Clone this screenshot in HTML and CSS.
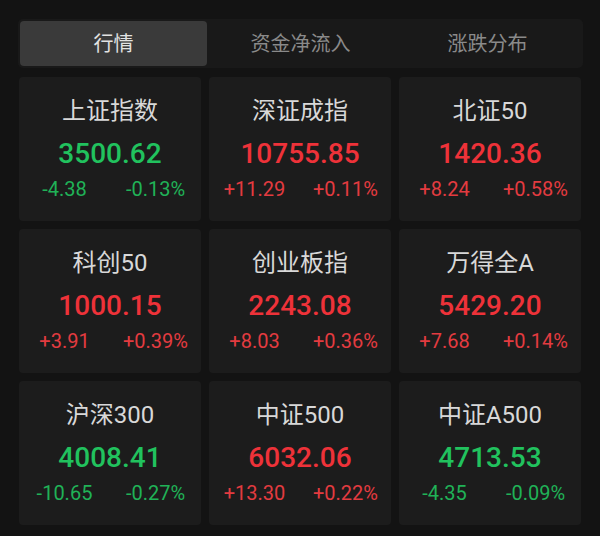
FILE: index.html
```html
<!DOCTYPE html>
<html lang="zh-CN">
<head>
<meta charset="utf-8">
<title>行情</title>
<link rel="stylesheet" href="styles.css">
</head>
<body>
<div class="page">
  <div class="tabs">
    <div class="tab active">行情</div>
    <div class="tab">资金净流入</div>
    <div class="tab">涨跌分布</div>
  </div>
  <div class="grid">
    <div class="card"><div class="name">上证指数</div><div class="price down">3500.62</div><div class="chg down"><span>-4.38</span><span>-0.13%</span></div></div>
    <div class="card"><div class="name">深证成指</div><div class="price up">10755.85</div><div class="chg up"><span>+11.29</span><span>+0.11%</span></div></div>
    <div class="card"><div class="name">北证50</div><div class="price up">1420.36</div><div class="chg up"><span>+8.24</span><span>+0.58%</span></div></div>
    <div class="card"><div class="name">科创50</div><div class="price up">1000.15</div><div class="chg up"><span>+3.91</span><span>+0.39%</span></div></div>
    <div class="card"><div class="name">创业板指</div><div class="price up">2243.08</div><div class="chg up"><span>+8.03</span><span>+0.36%</span></div></div>
    <div class="card"><div class="name">万得全A</div><div class="price up">5429.20</div><div class="chg up"><span>+7.68</span><span>+0.14%</span></div></div>
    <div class="card"><div class="name">沪深300</div><div class="price down">4008.41</div><div class="chg down"><span>-10.65</span><span>-0.27%</span></div></div>
    <div class="card"><div class="name">中证500</div><div class="price up">6032.06</div><div class="chg up"><span>+13.30</span><span>+0.22%</span></div></div>
    <div class="card"><div class="name">中证A500</div><div class="price down">4713.53</div><div class="chg down"><span>-4.35</span><span>-0.09%</span></div></div>
  </div>
</div>
</body>
</html>
```
FILE: styles.css
```css
html, body {
  margin: 0;
  padding: 0;
  background: #131313;
}
body {
  width: 600px;
  height: 536px;
  overflow: hidden;
  font-family: Roboto, "Noto Sans CJK SC", sans-serif;
}
.page {
  padding-top: 19px;
}
.tabs {
  display: grid;
  grid-template-columns: repeat(3, 1fr);
  margin-left: 18px;
  width: 561px;
  padding: 2px;
  background: #191919;
  border-radius: 5px;
}
.tab {
  height: 45px;
  display: flex;
  align-items: center;
  justify-content: center;
  padding-bottom: 2px;
  box-sizing: border-box;
  font-family: "Noto Sans CJK SC", sans-serif;
  font-size: 20px;
  color: #8a8a8a;
  border-radius: 4px;
}
.tab.active {
  background: #3a3a3a;
  color: #e2e2e2;
}
.grid {
  display: grid;
  grid-template-columns: repeat(3, 182px);
  grid-auto-rows: 144px;
  gap: 8px;
  padding: 9px 19px 0 19px;
}
.card {
  background: #1c1c1c;
  border-radius: 4px;
  padding-top: 20px;
  box-sizing: border-box;
  text-align: center;
}
.name {
  font-size: 24px;
  line-height: 28px;
  color: #d8d8d8;
}
.price {
  margin-top: 12px;
  font-size: 28px;
  line-height: 34px;
  font-weight: 500;
}
.chg {
  margin-top: 6px;
  display: grid;
  grid-template-columns: 1fr 1fr;
  font-size: 20px;
  line-height: 24px;
}
.price.up { color: #ee3239; }
.price.down { color: #21c25e; }
.chg.up { color: #e33b40; }
.chg.down { color: #20b257; }
```
